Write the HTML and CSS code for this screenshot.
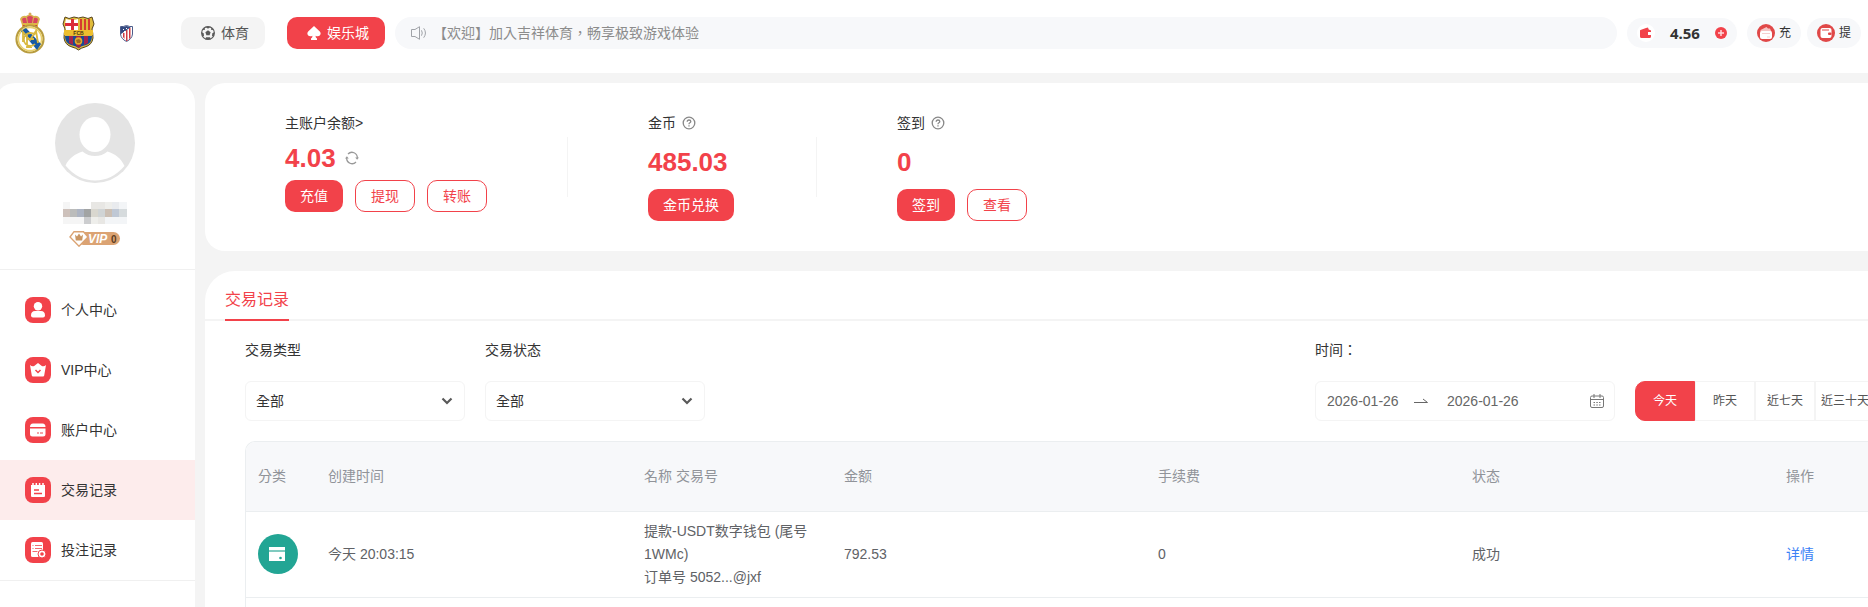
FILE: index.html
```html
<!DOCTYPE html>
<html lang="zh-TW">
<head>
    <meta charset="UTF-8">
    <meta name="viewport" content="width=device-width, initial-scale=1.0">
    <title>交易记录</title>
    <link rel="stylesheet" href="styles.css">
</head>
<body>
    <header class="header">
        <div class="clubs">
            <a href="#" class="club">
                <svg width="30" height="42" viewBox="0 0 30 42">
                    <path d="M7 13L5 7q2-4 6-3 4-3 8 0 4-1 6 3l-2 6z" fill="#d9b450"/>
                    <path d="M8 11L7 7q2-2 4-1l1 5zM22 11l1-4q-2-2-4-1l-1 5zM13 11l-1-6q3-2 6 0l-1 6z" fill="#d8455f"/>
                    <circle cx="15" cy="2" r="1.5" fill="#d9a95a"/>
                    <path d="M7 12h16v3H7z" fill="#e6b73c"/>
                    <path d="M8 13h2v1H8zM14 13h2v1h-2zM20 13h2v1h-2z" fill="#c23a50"/>
                    <circle cx="15" cy="27" r="13.5" fill="#fff" stroke="#b89c3f" stroke-width="2.2"/>
                    <circle cx="15" cy="27" r="11.6" fill="#fff" stroke="#e9d06a" stroke-width="1.6"/>
                    <path d="M6 19l5-3 15 16-4 6z" fill="#1659a4"/>
                    <path d="M8 30V20l7 8 6-9 2 12M20 23a6.500 6.500 0 1 0 0 9M12 27h7M12 23v12h5" fill="none" stroke="#d9b83f" stroke-width="1.8"/>
                </svg>
            </a>
            <a href="#" class="club">
                <svg width="33" height="35" viewBox="0 0 33 35">
                    <path d="M3 1l4 1.500 5-1.500 4.500 1L21 1l5 1.500L30 1l2 7-2 5q1 4 1 9-1 7-8 9-4 1-6.500 3Q14 32 10 31q-7-2-8-9 0-5 1-9L1 8z" fill="#e0bb3b" stroke="#57451f"/>
                    <path d="M4 3q6 2 12 0v11H4L3 8z" fill="#fff"/>
                    <path d="M9 3h3v11H9zM3 7h13v3H3z" fill="#db2c3b"/>
                    <path d="M18 3h2v11h-2zM22 3h2v11h-2zM26 3h2v11h-2z" fill="#d63d2f"/>
                    <path d="M3 20h27q0 7-6 9-5 1-7.500 3Q14 30 9 29q-6-2-6-9z" fill="#174b93"/>
                    <path d="M7 20h4v9l-4-2zM14 20h5v10l-2 2-3-2zM22 20h4v7l-4 2z" fill="#a3234c"/>
                    <path d="M2 14h29v5H2z" fill="#edbe2e"/>
                    <text x="16.500" y="18.600" class="fcb">FCB</text>
                    <circle cx="16.500" cy="25" r="3.800" fill="#e3a92f"/>
                    <path d="M14 24l3-1 2 2-1 2h-3z" fill="#a06b20"/>
                </svg>
            </a>
            <a href="#" class="club">
                <svg width="13" height="17" viewBox="0 0 13 17">
                    <path d="M.5 1.500Q3 2 6.500.5 10 2 12.500 1.500V9q-.5 5-6 7.500Q1 14 .5 9z" fill="#fff" stroke="#4d5c8a"/>
                    <path d="M3 8h1.500v6L3 12zM6 5h1.500v11H6zM9 3h1.500v10L9 14z" fill="#cf3a42"/>
                    <path d="M1 2q3 0 5.500-1Q9 2 11 2L1 9z" fill="#354a80"/>
                    <path d="M3 4h1v1H3zM6 3h1v1H6zM4 6h1v1H4z" fill="#fff"/>
                </svg>
            </a>
        </div>
        <button class="nav-btn">
            <svg width="14" height="14" viewBox="0 0 14 14">
                <circle cx="7" cy="7" r="6.400" fill="none" stroke="#595959" stroke-width="1.100"/>
                <path d="M7 4.300l2.600 1.900-1 3H5.400l-1-3z" fill="#595959"/>
                <path d="M4.500.700h5L7 2.800zM.5 6l2.200 1.200.3 2.800-1.700.3zM13.500 6l-2.200 1.200-.3 2.800 1.700.3zM5 11.200h4l.8 2.200H4.200zM1.300 4.200l2.400-2.600.3 2.200zM12.700 4.200l-2.400-2.600-.3 2.200z" fill="#595959"/>
            </svg>
            体育
        </button>
        <button class="nav-btn nav-casino">
            <svg width="14" height="14" viewBox="0 0 14 14">
                <path d="M7 0l5.800 5.600c2.400 2.600-.8 6.200-4.300 4.100q0 2 1.500 2.800V14H4v-1.500q1.500-.8 1.500-2.800C2 11.800-1.200 8.200 1.200 5.600z" fill="#fff"/>
            </svg>
            娱乐城
        </button>
        <div class="notice">
            <svg width="16" height="14" viewBox="0 0 16 14" fill="none" stroke="#a0a3a8">
                <path d="M.5 3.500H4L8.500.7v12.600L4 10.500H.5zM10.500 4.300q1.500 2.700 0 5.400M12.700 2.300q3.500 4.700 0 9.400"/>
            </svg>
            <span>【欢迎】加入吉祥体育，畅享极致游戏体验</span>
        </div>
        <div class="wallet">
            <svg width="18" height="18" viewBox="0 0 18 18">
                <circle cx="9" cy="9" r="9" fill="#fff"/>
                <path d="M3 6.500q0-.5.500-.5L9 4l2-.5.700 2 1.300.5q1 0 1 1v1h-3v3h3v1.500q0 1.500-1.500 1.500h-8Q3 14 3 12.500z" fill="#f2424a"/>
            </svg>
            <span class="wallet-sum">4.56</span>
            <button class="icon-btn" aria-label="充值">
                <svg width="12" height="12" viewBox="0 0 12 12">
                    <circle cx="6" cy="6" r="6" fill="#f2424a"/>
                    <path d="M6 3v6M3 6h6" stroke="#ffd9db" stroke-width="1.500"/>
                </svg>
            </button>
        </div>
        <div class="quick">
            <button class="quick-btn">
                <svg width="18" height="18" viewBox="0 0 18 18">
                    <circle cx="9" cy="9" r="9" fill="#e04848"/>
                    <path d="M3.500 8V6l6-3L11 4.500h2L14.500 8z" fill="#f6c4c4"/>
                    <rect x="3" y="7" width="12" height="8" rx="2" fill="#fff"/>
                    <path d="M5 9.500h8M10 13h3" stroke="#f6d0d0"/>
                </svg>
                充
            </button>
            <button class="quick-btn">
                <svg width="18" height="18" viewBox="0 0 18 18">
                    <circle cx="9" cy="9" r="9" fill="#e04848"/>
                    <rect x="3.500" y="4" width="11" height="10" rx="2" fill="#fff"/>
                    <path d="M5 6h7" stroke="#e04848"/>
                    <rect x="11" y="8.500" width="3.500" height="2.500" rx="1" fill="#e04848"/>
                </svg>
                提
            </button>
        </div>
    </header>

    <div class="layout">
        <aside class="sidebar">
            <div class="profile">
                <svg class="avatar" width="80" height="80" viewBox="0 0 80 80">
                    <circle cx="40" cy="40" r="40" fill="#e4e4e4"/>
                    <ellipse cx="40" cy="31.500" rx="15.500" ry="17.500" fill="#fff"/>
                    <path d="M27.500 48.500C20 51 14 55 10.500 62.500Q23 77.500 40 77.500T69.500 63C66 55 60 51 52.500 48.500Q47 53 40 53T27.500 48.500z" fill="#fff"/>
                </svg>
                <svg class="masked-name" width="64" height="22" viewBox="0 0 64 22" shape-rendering="crispEdges">
                    <path d="M0 0h7v7H0zM7 15h14v7H7zM0 15h7v7H0z" fill="#f5f5f5"/>
                    <path d="M28 0h14v7H28zM35 15h7v7h-7z" fill="#e8e7e4"/>
                    <path d="M42 0h7v7h-7zM28 15h7v7h-7z" fill="#eeeeeb"/>
                    <path d="M49 0h7v7h-7z" fill="#e9ebee"/>
                    <path d="M56 0h8v7h-8zM42 15h22v7H42z" fill="#f3f5f7"/>
                    <path d="M0 7h7v8H0z" fill="#cdc1bb"/>
                    <path d="M7 7h7v8H7z" fill="#bbbcbb"/>
                    <path d="M14 7h7v8h-7z" fill="#adb4c2"/>
                    <path d="M21 7h7v8h-7z" fill="#a2a4a4"/>
                    <path d="M28 7h7v8h-7z" fill="#d9d7cf"/>
                    <path d="M35 7h7v8h-7z" fill="#d0d4d5"/>
                    <path d="M42 7h7v8h-7z" fill="#cbbfb4"/>
                    <path d="M49 7h7v8h-7z" fill="#bfc8d5"/>
                    <path d="M56 7h8v8h-8z" fill="#d6dbdd"/>
                    <path d="M21 15h7v7h-7z" fill="#cccdcf"/>
                </svg>
                <svg width="52" height="16" viewBox="0 0 52 16">
                    <rect x="8" y="1" width="43" height="13" rx="6.500" fill="#dba373"/>
                    <path d="M5 .700h9.500L19 6l-9 9.200L1 6z" fill="#fff" stroke="#dba373" stroke-width="1.400"/>
                    <path d="M6 3.500l2 2 2-3 2 3 2-2-.8 6H6.800z" fill="#c99562"/>
                    <text x="19" y="11.800" class="vip-text">VIP</text>
                    <text x="42" y="11.500" class="vip-level">0</text>
                </svg>
            </div>
            <nav class="menu">
                <a href="#" class="menu-item">
                    <svg width="26" height="26" viewBox="0 0 26 26">
                        <rect width="26" height="26" rx="8" fill="#f2424a"/>
                        <circle cx="13" cy="9.300" r="4.200" fill="#fff"/>
                        <path d="M6 18.500q0-4.500 4-4.500h6q4 0 4 4.500 0 2-2 2H8q-2 0-2-2z" fill="#fff"/>
                    </svg>
                    个人中心
                </a>
                <a href="#" class="menu-item">
                    <svg width="26" height="26" viewBox="0 0 26 26">
                        <rect width="26" height="26" rx="8" fill="#f2424a"/>
                        <path d="M5 8q2 2 4.200 1L13 6l3.800 3q2.200 1 4.200-1l-1.800 10.500q-.2 1-1.200 1H8q-1 0-1.200-1z" fill="#fff"/>
                        <path d="M10.500 13l2.500 2.500 2.500-2.500" fill="none" stroke="#f2424a" stroke-width="1.500"/>
                    </svg>
                    VIP中心
                </a>
                <a href="#" class="menu-item">
                    <svg width="26" height="26" viewBox="0 0 26 26">
                        <rect width="26" height="26" rx="8" fill="#f2424a"/>
                        <path d="M5 10q0-3.500 3-3.500h9.500q3 0 3 3.500zM5 11.500h15.500V17q0 2.500-2.500 2.500H7.500Q5 19.500 5 17z" fill="#fff"/>
                        <path d="M12 16h2M15 16h3" stroke="#f2868b" stroke-width="1.500"/>
                    </svg>
                    账户中心
                </a>
                <a href="#" class="menu-item active">
                    <svg width="26" height="26" viewBox="0 0 26 26">
                        <rect width="26" height="26" rx="8" fill="#f2424a"/>
                        <path d="M6 8h14v11q0 1-1 1H7q-1 0-1-1z" fill="#fff"/>
                        <path d="M8 6v3M11.300 6v3M14.600 6v3M18 6v3" stroke="#fff" stroke-width="1.500"/>
                        <path d="M9 13h5M9 16.500h8" stroke="#f2424a" stroke-width="1.400"/>
                    </svg>
                    交易记录
                </a>
                <a href="#" class="menu-item">
                    <svg width="26" height="26" viewBox="0 0 26 26">
                        <rect width="26" height="26" rx="8" fill="#f2424a"/>
                        <rect x="6" y="5" width="12" height="15" rx="1.500" fill="#fff"/>
                        <path d="M7.500 8.500h1M10 8.500h7M7.500 11.500h1M10 11.500h7M7.500 14.500h5" stroke="#f2686e"/>
                        <circle cx="17" cy="17" r="4" fill="#fff" stroke="#f2424a"/>
                        <circle cx="17" cy="17" r="1.800" fill="#f2424a"/>
                    </svg>
                    投注记录
                </a>
            </nav>
        </aside>

        <main class="main">
            <section class="card balance">
                <div class="account account-main">
                    <a href="#" class="label">主账户余额&gt;</a>
                    <div class="amount amount-main">
                        4.03
                        <button class="icon-btn" aria-label="刷新">
                            <svg width="14" height="14" viewBox="0 0 14 14">
                                <path d="M3 3a5.400 5.400 0 0 1 9.300 4M11 11A5.400 5.400 0 0 1 1.700 7" fill="none" stroke="#999" stroke-width="1.300"/>
                                <path d="M10.200 6.500h3.800l-1.900 2.300zM0 7.500h3.800L1.900 5.200z" fill="#999"/>
                            </svg>
                        </button>
                    </div>
                    <div class="actions">
                        <button class="btn">充值</button>
                        <button class="btn btn-line">提现</button>
                        <button class="btn btn-line">转账</button>
                    </div>
                </div>
                <div class="account account-coin">
                    <div class="label">
                        金币
                        <svg width="14" height="14" viewBox="0 0 14 14" fill="none" stroke="#888" stroke-width="1.300">
                            <circle cx="7" cy="7" r="5.800"/>
                            <path d="M5.200 5.700q0-1.700 1.800-1.700t1.800 1.500q0 .8-.9 1.300T7 8.200M7 9.200v1.400"/>
                        </svg>
                    </div>
                    <div class="amount">485.03</div>
                    <div class="actions">
                        <button class="btn">金币兑换</button>
                    </div>
                </div>
                <div class="account">
                    <div class="label">
                        签到
                        <svg width="14" height="14" viewBox="0 0 14 14" fill="none" stroke="#888" stroke-width="1.300">
                            <circle cx="7" cy="7" r="5.800"/>
                            <path d="M5.200 5.700q0-1.700 1.800-1.700t1.800 1.500q0 .8-.9 1.300T7 8.200M7 9.200v1.400"/>
                        </svg>
                    </div>
                    <div class="amount">0</div>
                    <div class="actions">
                        <button class="btn">签到</button>
                        <button class="btn btn-line">查看</button>
                    </div>
                </div>
            </section>

            <section class="card records">
                <div class="tabs">
                    <a href="#" class="tab">交易记录</a>
                </div>
                <div class="filters">
                    <div class="filter">
                        <label for="type">交易类型</label>
                        <div class="select-box">
                            <select id="type"><option>全部</option></select>
                            <svg width="12" height="8" viewBox="0 0 12 8"><path d="M1.500 1.500L6 6l4.500-4.500" fill="none" stroke="#595959" stroke-width="2.200"/></svg>
                        </div>
                    </div>
                    <div class="filter">
                        <label for="state">交易状态</label>
                        <div class="select-box">
                            <select id="state"><option>全部</option></select>
                            <svg width="12" height="8" viewBox="0 0 12 8"><path d="M1.500 1.500L6 6l4.500-4.500" fill="none" stroke="#595959" stroke-width="2.200"/></svg>
                        </div>
                    </div>
                    <div class="filter filter-time">
                        <label for="from">时间：</label>
                        <div class="time-row">
                            <div class="date-range">
                                <input type="text" id="from" value="2026-01-26">
                                <svg class="arrow" width="14" height="6" viewBox="0 0 14 6"><path d="M0 4.500h13.500L9 1" fill="none" stroke="#666"/></svg>
                                <input type="text" aria-label="结束日期" value="2026-01-26">
                                <svg class="calendar" width="14" height="14" viewBox="0 0 14 14" fill="none" stroke="#777">
                                    <rect x=".5" y="2" width="13" height="11.500" rx="1.500"/>
                                    <path d="M.5 5.500h13M4 0v4M10 0v4M3.500 8.500h1.500M6.300 8.500h1.500M9 8.500h1.500M3.500 11h1.500M6.300 11h1.500M9 11h1.500"/>
                                </svg>
                            </div>
                            <div class="quick-days">
                                <button class="day active">今天</button>
                                <button class="day">昨天</button>
                                <button class="day">近七天</button>
                                <button class="day">近三十天</button>
                            </div>
                        </div>
                    </div>
                </div>
                <div class="table-wrap">
                    <table>
                        <thead>
                            <tr>
                                <th class="col-kind">分类</th>
                                <th class="col-time">创建时间</th>
                                <th class="col-name">名称 交易号</th>
                                <th class="col-wide">金额</th>
                                <th class="col-wide">手续费</th>
                                <th class="col-wide">状态</th>
                                <th>操作</th>
                            </tr>
                        </thead>
                        <tbody>
                            <tr>
                                <td>
                                    <svg class="kind" width="40" height="40" viewBox="0 0 40 40">
                                        <circle cx="20" cy="20" r="20" fill="#22a594"/>
                                        <path d="M11 13h16v3H11zM11 18h16v9H11z" fill="#fff"/>
                                        <path d="M11 16h16v2H11z" fill="#7fcabf"/>
                                        <circle cx="22.500" cy="24" r="1.300" fill="#22a594"/>
                                    </svg>
                                </td>
                                <td>今天 20:03:15</td>
                                <td>提款-USDT数字钱包 (尾号1WMc)<br>订单号 5052...@jxf</td>
                                <td>792.53</td>
                                <td>0</td>
                                <td>成功</td>
                                <td><a href="#" class="detail">详情</a></td>
                            </tr>
                        </tbody>
                    </table>
                </div>
            </section>
        </main>
    </div>
</body>
</html>
```
FILE: styles.css
```css
* {
    box-sizing: border-box;
}
body {
    margin: 0;
    min-height: 100vh;
    display: flex;
    flex-direction: column;
    overflow: hidden;
    background-color: #f4f4f4;
    color: #333;
    font-family: "Liberation Sans", "Noto Sans CJK TC", sans-serif;
    font-size: 14px;
    line-height: 24px;
}
button, input, select {
    font: inherit;
    color: inherit;
    padding: 0;
    border: 0;
    background: none;
}
button {
    cursor: pointer;
}
a {
    color: inherit;
    text-decoration: none;
}
svg {
    display: block;
    flex: none;
}

/* Header */
.header {
    display: flex;
    align-items: center;
    height: 73px;
    padding: 0 7px 7px 6px;
    background-color: #fff;
}
.clubs {
    display: flex;
    margin-right: 31px;
}
.club {
    display: flex;
    align-items: center;
    justify-content: center;
    width: 48px;
    height: 42px;
}
.fcb {
    font-size: 5px;
    font-weight: bold;
    text-anchor: middle;
    fill: #4b3a12;
}
.nav-btn {
    display: flex;
    align-items: center;
    gap: 6px;
    height: 32px;
    padding: 0 16px 0 20px;
    margin-right: 22px;
    border-radius: 10px;
    background-color: #f4f4f4;
    color: #555;
}
.nav-casino {
    margin-right: 10px;
    background-color: #f2424a;
    color: #fff;
}
.notice {
    flex: 1;
    display: flex;
    align-items: center;
    gap: 6px;
    height: 32px;
    padding: 0 16px;
    margin-right: 10px;
    border-radius: 16px;
    background-color: #f7f8fa;
    color: #8c8c8c;
}
.wallet {
    display: flex;
    align-items: center;
    justify-content: space-between;
    width: 110px;
    height: 30px;
    padding: 0 10px;
    margin-right: 10px;
    border-radius: 15px;
    background-color: #f7f8fa;
}
.wallet-sum {
    font-family: "Noto Sans", sans-serif;
    font-size: 15px;
    font-weight: bold;
}
.quick {
    display: flex;
    gap: 6px;
}
.quick-btn {
    display: flex;
    align-items: center;
    gap: 4px;
    height: 30px;
    padding: 0 10px;
    border-radius: 15px;
    background-color: #f7f8fa;
    font-size: 12px;
}

/* Layout */
.layout {
    flex: 1;
    display: flex;
    gap: 10px;
    padding-top: 10px;
}
.sidebar {
    flex: none;
    width: 200px;
    margin-left: -5px;
    border-radius: 20px 20px 0 0;
    background-color: #fff;
}
.profile {
    display: flex;
    flex-direction: column;
    align-items: center;
    padding: 20px 0 22px;
    border-bottom: 1px solid #f0f0f0;
}
.masked-name {
    margin: 19px 0 7px;
}
.vip-text {
    font-size: 12px;
    font-weight: bold;
    font-style: italic;
    fill: #fff;
}
.vip-level {
    font-size: 10px;
    font-weight: bold;
    fill: #5a3c22;
}
.menu {
    padding-top: 10px;
    border-bottom: 1px solid #f0f0f0;
}
.menu-item {
    display: flex;
    align-items: center;
    gap: 10px;
    height: 60px;
    padding-left: 30px;
}
.menu-item.active {
    background-color: #fdecec;
}
.main {
    flex: 1;
    min-width: 0;
    display: flex;
    flex-direction: column;
    gap: 20px;
}
.card {
    background-color: #fff;
}

/* Balance */
.balance {
    display: flex;
    height: 168px;
    padding: 28px 80px 0;
    border-radius: 20px 0 0 20px;
}
.account {
    display: flex;
    flex-direction: column;
    gap: 8px;
}
.account-main, .account-coin {
    margin-right: 80px;
    background: linear-gradient(#f4f4f4, #f4f4f4) right 26px / 1px 60px no-repeat;
}
.account-main {
    width: 283px;
}
.account-coin {
    width: 169px;
}
.label {
    display: flex;
    align-items: center;
    gap: 6px;
}
.amount {
    display: flex;
    align-items: center;
    gap: 9px;
    height: 38px;
    color: #f2424a;
    font-size: 26px;
    font-weight: bold;
}
.amount-main {
    height: 29px;
}
.actions {
    display: flex;
    gap: 12px;
}
.btn {
    height: 32px;
    padding: 0 15px;
    border-radius: 10px;
    background-color: #f2424a;
    color: #fff;
}
.btn-line {
    border: 1px solid #f2424a;
    background-color: #fff;
    color: #f2424a;
}

/* Records */
.records {
    flex: 1;
    display: flex;
    flex-direction: column;
    border-radius: 30px 0 0 0;
}
.tabs {
    display: flex;
    height: 50px;
    padding-left: 20px;
    box-shadow: inset 0 -2px #f4f4f4;
}
.tab {
    border-bottom: 2px solid #f2424a;
    color: #f2424a;
    font-size: 16px;
    line-height: 58px;
}
.filters {
    display: flex;
    gap: 20px;
    /* the last day button runs past the card */
    margin-right: -7px;
    padding: 17px 0 20px 40px;
}
.filter {
    display: flex;
    flex-direction: column;
    gap: 19px;
}
.filter-time {
    margin-left: auto;
}
.select-box {
    display: flex;
    align-items: center;
}
select {
    appearance: none;
    width: 220px;
    height: 40px;
    padding-left: 10px;
    border: 1px solid #f4f4f4;
    border-radius: 6px;
}
.select-box svg {
    margin: 0 12px 0 -24px;
    pointer-events: none;
}
.time-row {
    display: flex;
    gap: 20px;
}
.date-range {
    display: flex;
    align-items: center;
    width: 300px;
    height: 40px;
    padding: 0 10px 0 11px;
    border: 1px solid #f4f4f4;
    border-radius: 6px;
    color: #666;
}
.date-range input {
    width: 87px;
}
.arrow {
    margin-right: 19px;
}
.calendar {
    margin-left: auto;
}
.quick-days {
    display: flex;
}
.day {
    width: 60px;
    height: 40px;
    border: 1px solid #f4f4f4;
    color: #555;
    font-size: 12px;
}
.day.active {
    border-color: #f2424a;
    border-radius: 10px 0 0 10px;
    background-color: #f2424a;
    color: #fff;
}
.table-wrap {
    flex: 1;
    margin-left: 40px;
    overflow: hidden;
    border: 1px solid #ebeef0;
    border-width: 1px 0 0 1px;
    border-radius: 10px 0 0 0;
}
table {
    width: 100%;
    table-layout: fixed;
    border-collapse: collapse;
    color: #606266;
    line-height: 23px;
}
th, td {
    padding: 8px 12px;
    border-bottom: 1px solid #ebeef0;
    text-align: left;
}
th {
    height: 69px;
    background-color: #f7f8fa;
    color: #909399;
    font-weight: normal;
}
.col-kind {
    width: 70px;
}
.col-time {
    width: 316px;
}
.col-name {
    width: 200px;
}
.col-wide {
    width: 314px;
}
.detail {
    color: #3b82f6;
}
```
